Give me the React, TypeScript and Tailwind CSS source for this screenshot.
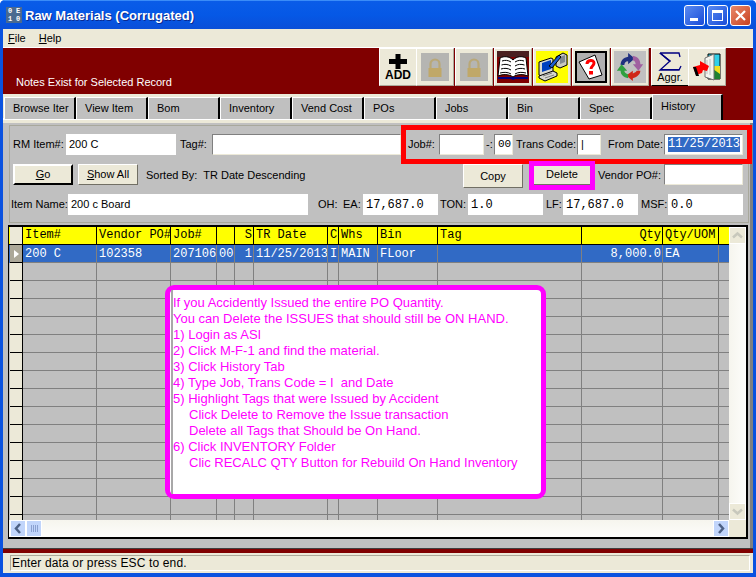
import React from "react";

const tabs = ["Browse Iter", "View Item", "Bom", "Inventory", "Vend Cost", "POs", "Jobs", "Bin", "Spec"];

const columns = [
  { label: "Item#", w: "w-[74px]", value: "200 C" },
  { label: "Vendor PO#", w: "w-[74px]", value: "102358" },
  { label: "Job#", w: "w-[46px]", value: "207106" },
  { label: "", w: "w-[18px]", value: "00" },
  { label: "S", w: "w-[19px]", value: "1", right: true },
  { label: "TR Date", w: "w-[74px]", value: "11/25/2013" },
  { label: "C", w: "w-[11px]", value: "I" },
  { label: "Whs", w: "w-[39px]", value: "MAIN" },
  { label: "Bin", w: "w-[60px]", value: "FLoor" },
  { label: "Tag", w: "w-[144px]", value: "" },
  { label: "Qty", w: "w-[81px]", value: "8,000.0", right: true },
  { label: "Qty/UOM", w: "w-[56px]", value: "EA" },
  { label: "", w: "w-[11px]", value: "" },
];

const noteLines = [
  { text: "If you Accidently Issued the entire PO Quantity." },
  { text: "You can Delete the ISSUES that should still be ON HAND." },
  { text: "1) Login as ASI" },
  { text: "2) Click M-F-1 and find the material." },
  { text: "3) Click History Tab" },
  { text: "4) Type Job, Trans Code = I  and Date" },
  { text: "5) Highlight Tags that were Issued by Accident" },
  { text: "Click Delete to Remove the Issue transaction", indent: true },
  { text: "Delete all Tags that Should be On Hand.", indent: true },
  { text: "6) Click INVENTORY Folder" },
  { text: "Clic RECALC QTY Button for Rebuild On Hand Inventory", indent: true },
];

const Field = ({ className, children }: { className: string; children?: React.ReactNode }) => (
  <div className={`h-[21px] bg-white shrink-0 flex items-center pl-[3px] overflow-hidden whitespace-pre ${className}`}>
    {children}
  </div>
);

const Sunken = ({ className, children }: { className: string; children?: React.ReactNode }) => (
  <Field className={`border border-t-[#808080] border-l-[#808080] border-b-[#ece9d8] border-r-[#ece9d8] ${className}`}>
    {children}
  </Field>
);

const Label = ({ className, children }: { className: string; children: React.ReactNode }) => (
  <div className={`shrink-0 whitespace-nowrap ${className}`}>{children}</div>
);

const Button = ({ className, children }: { className: string; children: React.ReactNode }) => (
  <div
    className={`shrink-0 flex items-center justify-center bg-[#ece9d8] border border-t-white border-l-white border-b-[#716f64] border-r-[#716f64] ${className}`}
  >
    {children}
  </div>
);

const ToolButton = ({ className = "", children }: { className?: string; children: React.ReactNode }) => (
  <div
    className={`w-[38px] h-[38px] -mr-px shrink-0 flex flex-col items-center justify-center text-black bg-[#ece9d8] border-r border-b border-r-[#aca899] border-b-[#aca899] border-t border-l border-t-white border-l-white ${className}`}
  >
    {children}
  </div>
);

const Lock = () => (
  <svg width="28" height="28" viewBox="0 0 28 28">
    <rect width="28" height="28" fill="#b5b5b2" />
    <path d="M9.500 15V11a4.500 4.500 0 0 1 9 0v4" fill="none" stroke="#b9a878" strokeWidth="2.200" />
    <rect x="7.500" y="15" width="13" height="9" fill="#c0a868" />
  </svg>
);

const Book = () => (
  <svg width="32" height="32" viewBox="0 0 32 32">
    <rect width="32" height="32" fill="#800000" />
    <rect width="32" height="6" fill="#4a2020" />
    <path d="M1 26h30v2H18l-2 1-2-1H1z" fill="#000080" />
    <path d="M16 9C12 5 7 5 3 7L1 25c5-2 11-2 15 1 4-3 10-3 15-1L29 7c-4-2-9-2-13 2z" fill="#fff" stroke="#000" />
    <path d="M5 10c3-1 6-1 9 1M4.500 14c3-1 6-1 9.500 1M4 18c3-1 7-1 10 1M3 22c4-1 8-1 11 1M18 11c3-2 6-2 9-1M18 15c3-2 6-2 9.500-1M18 19c3-2 7-2 10-1M18 23c3-2 7-2 11-1" fill="none" stroke="#000" />
  </svg>
);

const Computer = () => (
  <svg width="32" height="32" viewBox="0 0 32 32">
    <rect width="32" height="32" fill="#ffff00" />
    <path d="M3 11l12-4 2 1v13l-12 4-2-1z" fill="#d8d8d0" stroke="#000" />
    <path d="M6 12l9-3v9l-9 3z" fill="#0040c0" />
    <path d="M3 25l14-5 4 2v3l-12 5-6-3z" fill="#d8d8d0" stroke="#000" />
    <path d="M7 25l9-3M9 27l9-3" stroke="#808080" />
    <path d="M20 6l7-4 4 2v10l-7 3-4-2z" fill="#c8c8c0" stroke="#000" />
    <path d="M24 6l5-2v7l-5 2z" fill="#808890" />
    <path d="M13 15L23 4l2 2-9 11z" fill="#2060d0" stroke="#000" />
  </svg>
);

const Help = () => (
  <svg width="28" height="28" viewBox="0 0 28 28">
    <rect width="28" height="28" fill="#b0b0b0" />
    <path d="M2 9L18 2l7 20-13 4z" fill="#fff" stroke="#000" />
    <path d="M10 11c0-4 7-5 7-1 0 3-3 3-3 6" fill="none" stroke="#ff0000" strokeWidth="3" />
    <rect x="12" y="18" width="4" height="3.500" fill="#ff0000" />
  </svg>
);

const Arrows = () => (
  <svg width="32" height="32" viewBox="0 0 34 34">
    <rect width="34" height="34" fill="#c0c0c0" />
    <path d="M7 15c0-5 3-8 8-9V2l7 6-7 6v-3c-3 0-4 2-4 4z" fill="#203080" />
    <path d="M20 5c5 1 8 4 8 9h3l-5 7-6-7h3c0-2-1-4-3-4z" fill="#a060a0" />
    <path d="M28 21c0 4-4 7-8 8v3l-7-6 7-5v3c2-1 4-2 4-3z" fill="#d02818" />
    <path d="M15 29c-5-1-8-4-8-8H3l5-7 6 7h-3c0 2 2 3 4 4z" fill="#30a040" />
  </svg>
);

const Sigma = () => (
  <svg width="25" height="19" viewBox="0 0 25 19">
    <path d="M2 1h19l1 4M2 1l10 8L2 18h19l2-4" fill="none" stroke="#000080" strokeWidth="1.300" />
    <path d="M3 1l10 8-1.500 1L1 1z" fill="#000080" />
    <path d="M3 17h18v1H3z" fill="#000080" />
  </svg>
);

const Exit = () => (
  <svg width="30" height="30" viewBox="0 0 30 30">
    <path d="M16 2h12v25H16z" fill="#30d0e8" stroke="#000" />
    <path d="M22 14h6v13h-6z" fill="#f0e020" />
    <path d="M21 17l7 5v5h-6z" fill="#208030" />
    <path d="M13 6l9-4v26l-9-3z" fill="#f4f4ee" stroke="#707070" />
    <path d="M15 8v14M18 7v16" stroke="#c0c0c0" />
    <path d="M1 15l7-2V9l9 5-2 5-4-1-1 3-6 2z" fill="#ff0000" />
    <path d="M1 15l3 9h3l-3-9z" fill="#000" />
  </svg>
);

const Chevron = ({ dir }: { dir: "left" | "right" | "up" | "down" }) => {
  const d = {
    left: "M8 2L4 6.500l4 4.500",
    right: "M4 2l4 4.500L4 11",
    up: "M2 8.500l4.500-4 4.500 4",
    down: "M2 4.500l4.500 4 4.500-4",
  }[dir];
  return (
    <svg width="13" height="13" viewBox="0 0 13 13">
      <path d={d} fill="none" stroke="currentColor" strokeWidth="2.500" />
    </svg>
  );
};

export default function App() {
  return (
    <div className="relative w-[756px] h-[577px] overflow-hidden rounded-t-[5px] flex flex-col bg-[#0a52e0] text-[11px] text-black font-['Liberation_Sans',Arial,sans-serif]">
      <div className="h-[29px] shrink-0 flex items-center pl-[6px] pr-[5px] bg-gradient-to-b from-[#0a5ce8] via-[#0558e6] to-[#0a4fd8] border-t border-t-[#3a8cf8]">
        <div className="w-[16px] h-[16px] bg-[#4a6a90] text-white text-[7px] font-bold leading-[8px] grid grid-cols-2 text-center font-['Liberation_Mono',monospace] shrink-0">
          <span>0</span>
          <span>E</span>
          <span>1</span>
          <span>0</span>
        </div>
        <div className="ml-[3px] pt-px text-white font-bold text-[13px] [text-shadow:1px_1px_#0a2a90]">Raw Materials (Corrugated)</div>
        <div className="ml-auto flex gap-[2px]">
          <div className="w-[21px] h-[21px] rounded-[3px] border border-white bg-gradient-to-br from-[#5a8af0] to-[#1a4ad8] flex items-end pl-[5px] pb-[4px]">
            <div className="w-[8px] h-[3px] bg-white" />
          </div>
          <div className="w-[21px] h-[21px] rounded-[3px] border border-white bg-gradient-to-br from-[#5a8af0] to-[#1a4ad8] p-[4px]">
            <div className="w-full h-full border border-t-[3px] border-white" />
          </div>
          <div className="w-[21px] h-[21px] rounded-[3px] border border-white bg-gradient-to-br from-[#e8886a] to-[#c8401c] flex items-center justify-center">
            <svg width="13" height="13" viewBox="0 0 13 13">
              <path d="M2 2l9 9M11 2l-9 9" stroke="#fff" strokeWidth="2.200" />
            </svg>
          </div>
        </div>
      </div>

      <div className="flex-1 mx-[3px] mb-[4px] flex flex-col bg-[#ece9d8]">
        <div className="h-[19px] shrink-0 flex items-center pl-[5px] gap-[13px] border-b border-b-white">
          <span>
            <u>F</u>ile
          </span>
          <span>
            <u>H</u>elp
          </span>
        </div>

        <div className="h-[46px] shrink-0 flex bg-[#800000] text-white">
          <div className="w-[376px] pl-[13px] pt-[26px]">Notes Exist for Selected Record</div>
          <div className="flex h-[38px]">
            <ToolButton>
              <svg width="18" height="15" viewBox="0 0 18 15">
                <path d="M6.500 0h5v5H18v5h-6.500v5h-5v-5H0V5h6.500z" fill="#000" />
              </svg>
              <span className="font-bold text-[12px] leading-[12px]">ADD</span>
            </ToolButton>
            <ToolButton className="mr-px">
              <Lock />
            </ToolButton>
            <ToolButton className="mr-px">
              <Lock />
            </ToolButton>
            <ToolButton className="mr-px">
              <Book />
            </ToolButton>
            <ToolButton className="mr-px">
              <Computer />
            </ToolButton>
            <ToolButton className="mr-px">
              <div className="border-2 border-black">
                <Help />
              </div>
            </ToolButton>
            <ToolButton className="mr-[2px]">
              <Arrows />
            </ToolButton>
            <ToolButton className="border-[2px] border-t-black border-l-black border-r-black border-b-black">
              <Sigma />
              <span className="text-[11px] leading-[12px]">Aggr.</span>
            </ToolButton>
            <ToolButton>
              <Exit />
            </ToolButton>
          </div>
        </div>

        <div className="h-[26px] shrink-0 flex">
          <div className="w-[720px] shrink-0 flex items-start pl-px pt-[3px] bg-[#ece9d8] border-b-2 border-b-white">
            {tabs.map((t) => (
              <div
                key={t}
                className="w-[72px] h-[22px] shrink-0 flex items-center pl-[8px] bg-[#c0c0c0] border-t border-l border-t-white border-l-white border-r-2 border-r-black whitespace-nowrap overflow-hidden"
              >
                {t}
              </div>
            ))}
            <div className="w-[71px] h-[29px] -mt-[3px] shrink-0 flex items-center pl-[8px] pb-[5px] bg-[#c0c0c0] border-t border-l border-t-white border-l-white border-r-2 border-r-black">
              History
            </div>
          </div>
          <div className="flex-1 bg-[#800000]" />
        </div>

        <div className="flex-1 flex flex-col pt-[3px] bg-[#ece9d8]">
          <div className="flex-1 flex flex-col bg-[#c0c0c0] border-r-[3px] border-r-[#808080] pt-[2px] pl-[5px] pr-[1px]">
            <div className="h-[98px] w-[740px] ml-px shrink-0 border border-[#a8a89c] flex flex-col pt-[8px]">
              <div className="flex items-center pl-[3px] h-[21px]">
                <Label className="w-[53px]">RM Item#:</Label>
                <Field className="w-[110px]">200 C</Field>
                <Label className="ml-[4px] w-[32px]">Tag#:</Label>
                <Sunken className="w-[189px]" />
                <Label className="ml-[7px] w-[31px]">Job#:</Label>
                <Sunken className="w-[45px]" />
                <Label className="w-[10px] pl-[2px]">-:</Label>
                <Sunken className="w-[19px] font-['Liberation_Mono',monospace]">00</Sunken>
                <Label className="ml-[3px] w-[61px]">Trans Code:</Label>
                <Sunken className="w-[24px] font-light">|</Sunken>
                <Label className="ml-[7px] w-[56px]">From Date:</Label>
                <Sunken className="w-[79px]">
                  <span className="bg-[#316ac5] text-white text-[12px] font-['Liberation_Mono',monospace] leading-[15px]">11/25/2013</span>
                </Sunken>
              </div>
              <div className="flex items-start pl-[3px] h-[24px] mt-[9px]">
                <Button className="w-[60px] h-[21px] border-[2px] border-t-black border-l-black border-r-black border-b-black">
                  <span>
                    <u>G</u>o
                  </span>
                </Button>
                <Button className="ml-[5px] w-[60px] h-[21px]">
                  <span>
                    <u>S</u>how All
                  </span>
                </Button>
                <Label className="ml-[8px] w-[317px] pt-[3px] whitespace-pre">Sorted By:  TR Date Descending</Label>
                <Button className="w-[60px] h-[24px]">Copy</Button>
                <Button className="ml-[10px] w-[58px] h-[21px]">Delete</Button>
                <Label className="ml-[7px] w-[66px] pt-[3px]">Vendor PO#:</Label>
                <Sunken className="w-[79px]" />
              </div>
              <div className="flex items-center pl-[1px] h-[21px] mt-[6px]">
                <Label className="w-[57px]">Item Name:</Label>
                <Field className="w-[240px]">200 c Board</Field>
                <Label className="ml-[10px] w-[25px]">OH:</Label>
                <Label className="w-[20px]">EA:</Label>
                <Field className="w-[75px] text-[12px] font-['Liberation_Mono',monospace]">17,687.0</Field>
                <Label className="ml-[2px] w-[28px]">TON:</Label>
                <Field className="w-[75px] text-[12px] font-['Liberation_Mono',monospace]">1.0</Field>
                <Label className="ml-[3px] w-[17px]">LF:</Label>
                <Field className="w-[75px] text-[12px] font-['Liberation_Mono',monospace]">17,687.0</Field>
                <Label className="ml-[3px] w-[27px]">MSF:</Label>
                <Field className="w-[75px] text-[12px] font-['Liberation_Mono',monospace]">0.0</Field>
              </div>
            </div>

            <div className="mt-[2px] w-[740px] h-[314px] shrink-0 border-2 border-l-[1px] border-black flex flex-col overflow-hidden bg-[#c0c0c0] text-[12px] font-['Liberation_Mono',monospace]">
              <div className="flex-1 flex min-h-0">
                <div className="flex-1 min-w-0 overflow-hidden">
                  <div className="h-[18px] flex bg-[#ffff00] border-b border-b-black pl-[1px]">
                    <div className="w-[13px] shrink-0 bg-[#ece9d8] border-r border-r-black" />
                    {columns.map((c, i) => (
                      <div
                        key={i}
                        className={`${c.w} shrink-0 pl-[2px] pr-[1px] leading-[17px] whitespace-pre overflow-hidden border-r border-r-black ${c.right ? "text-right" : ""}`}
                      >
                        {c.label}
                      </div>
                    ))}
                  </div>
                  {Array.from({ length: 16 }).map((_, r) => (
                    <div key={r} className={`h-[18px] flex pl-[1px] ${r === 0 ? "bg-[#316ac5] text-white" : ""}`}>
                      <div
                        className={`w-[13px] shrink-0 border-r border-b border-black flex items-center justify-center ${r === 0 ? "bg-[#aca899]" : "bg-[#ece9d8]"}`}
                      >
                        {r === 0 && <div className="w-0 h-0 border-y-[4px] border-y-transparent border-l-[5px] border-l-white" />}
                      </div>
                      {columns.map((c, i) => (
                        <div
                          key={i}
                          className={`${c.w} shrink-0 pl-[2px] pr-[1px] leading-[18px] whitespace-pre overflow-hidden border-r border-b border-[#808080] ${c.right ? "text-right" : ""}`}
                        >
                          {r === 0 ? c.value : ""}
                        </div>
                      ))}
                    </div>
                  ))}
                </div>
                <div className="w-[17px] shrink-0 flex flex-col justify-between bg-gradient-to-r from-[#f6f5ee] to-[#fdfdfb]">
                  <div className="w-[17px] h-[17px] bg-[#ece9d8] border border-white text-[#c8c8bc] flex items-center justify-center">
                    <Chevron dir="up" />
                  </div>
                  <div className="w-[17px] h-[17px] bg-[#ece9d8] border border-white text-[#c8c8bc] flex items-center justify-center">
                    <Chevron dir="down" />
                  </div>
                </div>
              </div>
              <div className="h-[17px] shrink-0 flex bg-gradient-to-b from-[#f6f5ee] to-[#fdfdfb]">
                <div className="w-[16px] ml-px h-[17px] bg-[#c1d5fb] border border-white text-[#4d6185] flex items-center justify-center">
                  <Chevron dir="left" />
                </div>
                <div className="w-[16px] h-[17px] bg-[#c1d5fb] border border-white flex items-center justify-center gap-px">
                  {[0, 1, 2, 3].map((b) => (
                    <div key={b} className="w-px h-[7px] bg-[#8aa0d0]" />
                  ))}
                </div>
                <div className="flex-1" />
                <div className="w-[16px] h-[17px] bg-[#c1d5fb] border border-white text-[#4d6185] flex items-center justify-center">
                  <Chevron dir="right" />
                </div>
                <div className="w-[17px] bg-[#ece9d8]" />
              </div>
            </div>
            <div className="flex-1" />
            <div className="h-px bg-[#404040] -mr-[4px] -ml-[5px]" />
          </div>
          <div className="h-[4px] shrink-0 bg-[#800000]" />
          <div className="h-[20px] shrink-0 pt-[2px] pl-[7px] pr-[3px] bg-[#ece9d8]">
            <div className="h-[16px] flex items-center pl-[1px] text-[12px] tracking-[0.15px] border border-t-[#aca899] border-l-[#aca899] border-b-white border-r-white">
              Enter data or press ESC to end.
            </div>
          </div>
        </div>
      </div>

      <div className="absolute left-[401px] top-[125px] w-[351px] h-[39px] border-[5px] border-[#ff0000]" />
      <div className="absolute left-[529px] top-[161px] w-[66px] h-[29px] border-[5px] border-[#ff00ff]" />
      <div className="absolute left-[165px] top-[285px] w-[381px] h-[214px] border-[5px] border-[#ff00ff] rounded-[9px] bg-white text-[#ff00ff] text-[13px] leading-[16px] whitespace-pre">
        <div className="h-full ml-px border-l-2 border-l-[#a8a8a8] pt-[5px]">
          {noteLines.map((l) => (
            <div key={l.text} className={l.indent ? "pl-[16px]" : ""}>
              {l.text}
            </div>
          ))}
        </div>
      </div>
    </div>
  );
}
